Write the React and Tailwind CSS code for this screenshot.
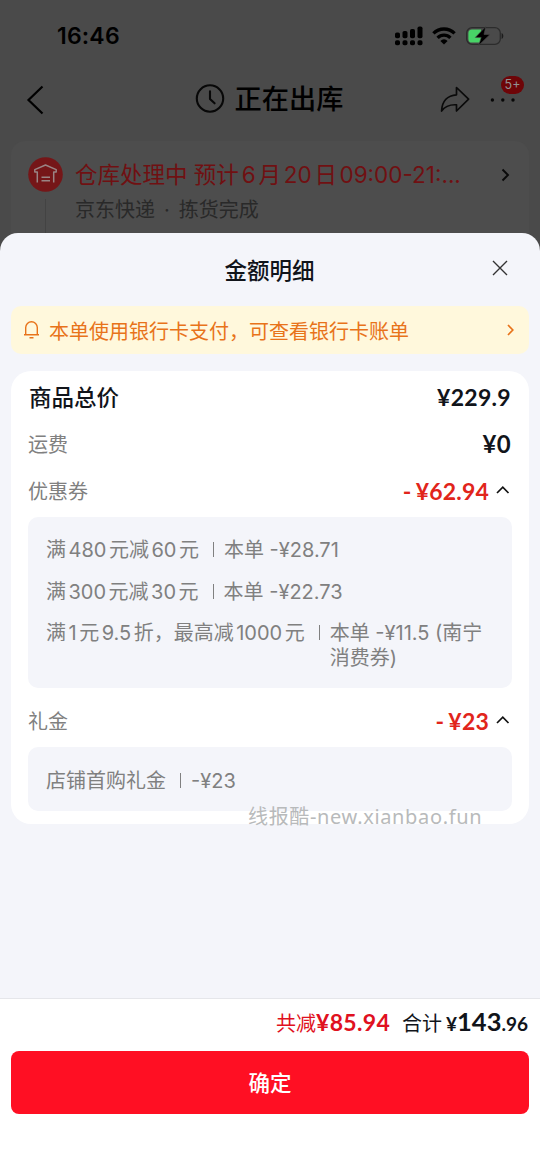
import React from "react";

// Splits a label into Chinese and numeric runs so that the numbers get a little side space.
function Mixed({ text, gap = "mx-[2.500px]" }) {
  return text.split(/([0-9.]+)/).map((part, i) =>
    /^[0-9.]+$/.test(part) ? (
      <span key={i} className={gap}>{part}</span>
    ) : (
      <span key={i}>{part}</span>
    )
  );
}

function StatusBar() {
  return (
    <div className="flex h-[72px] items-center justify-between pl-[57px] pr-[36px]">
      <span className="text-[23px] font-semibold tracking-[0.2px] text-black">16:46</span>
      <div className="flex items-center">
        <svg className="h-[20px] w-[28px]" viewBox="0 0 28 20" fill="#000">
          <rect x="0" y="6.500" width="5" height="5.700" rx="1.800" />
          <rect x="7.500" y="5" width="5" height="7.200" rx="1.800" />
          <rect x="15" y="3" width="5" height="9.200" rx="1.800" />
          <rect x="22.500" y="0.500" width="5" height="11.700" rx="1.800" />
          <rect x="0" y="14.300" width="5" height="5" rx="1.800" />
          <rect x="7.500" y="14.300" width="5" height="5" rx="1.800" />
          <rect x="15" y="14.300" width="5" height="5" rx="1.800" />
          <rect x="22.500" y="14.300" width="5" height="5" rx="1.800" />
        </svg>
        <svg className="ml-[9px] h-[18px] w-[24px]" viewBox="0 0 24 18" fill="none" stroke="#000" strokeWidth="3.300">
          <path d="M1.400 6.400a15 15 0 0 1 21.200 0" />
          <path d="M5.600 10.800a9 9 0 0 1 12.800 0" />
          <path d="M12 17.500l-3.600-3.600a5 5 0 0 1 7.200 0z" fill="#000" stroke="none" />
        </svg>
        <svg className="ml-[10px] h-[20px] w-[38px]" viewBox="0 0 38 20">
          <rect x="0.700" y="1.700" width="33.600" height="16.600" rx="5.400" fill="none" stroke="#2c2c2c" strokeWidth="1.300" />
          <path d="M6 3.500h9v13H6a3.600 3.600 0 0 1-3.600-3.600V7A3.600 3.600 0 0 1 6 3.500z" fill="#48d467" />
          <path d="M35.600 7v6c1.200-.5 1.700-1.600 1.700-3s-.5-2.500-1.700-3z" fill="#1c1c1c" />
          <path d="M19.800 .6L9.300 11.400h5.900L12.600 19.400 24 8.400h-6z" fill="#000" stroke="#4a4a4a" strokeWidth="0.600" />
        </svg>
      </div>
    </div>
  );
}

function NavBar() {
  return (
    <div className="flex h-[69px] items-start justify-between pl-[26px] pr-[16px] pt-[9px]">
      <svg className="mt-[4px] h-[30px] w-[158px]" viewBox="0 0 158 30" fill="none" stroke="#000" strokeWidth="2.200">
        <path d="M16.500 1.500L2.500 15l14 13.500" />
      </svg>
      <div className="flex items-center pt-px">
        <svg className="mb-[3px] mr-[10px] h-[30px] w-[30px]" viewBox="0 0 30 30" fill="none" stroke="#080808" strokeWidth="2.100">
          <circle cx="15" cy="14.500" r="13.200" />
          <path d="M15 7.300v7.600l4.600 4.400" strokeLinecap="round" strokeLinejoin="round" />
        </svg>
        <span className="text-[27.200px] font-medium leading-[36px] text-black">正在出库</span>
      </div>
      <div className="relative flex w-[170px] justify-end">
        <svg className="mr-[19px] mt-[5px] h-[27px] w-[30px]" viewBox="0 0 30 27" fill="none" stroke="#0a0a0a" strokeWidth="1.700" strokeLinejoin="round">
          <path d="M16.500 1.500L28.600 13.200 16.500 25v-6.200C9.500 18.400 4.800 20.500 1.600 25 2 15.300 7.500 9.300 16.500 8.800z" />
        </svg>
        <svg className="mr-[7px] mt-[14.500px] h-[8px] w-[28px]" viewBox="0 0 28 8" fill="#080808">
          <circle cx="3.400" cy="4" r="1.700" />
          <circle cx="13.800" cy="4" r="1.700" />
          <circle cx="24" cy="4" r="1.700" />
        </svg>
        <span className="absolute -top-[5px] right-0 flex h-[18px] w-[23px] items-center justify-center rounded-full bg-[#6e0508] text-[12.500px] text-[#929292]">
          5+
        </span>
      </div>
    </div>
  );
}

function DeliveryCard() {
  return (
    <div className="mx-[11px] flex h-[120px] rounded-[14px] bg-[#4d4d4d] px-[17px]">
      <div className="flex flex-col items-center pt-[16px]">
        <svg className="h-[35px] w-[35px]" viewBox="0 0 35 35">
          <circle cx="17.500" cy="17.500" r="17.300" fill="#751618" />
          <g fill="none" stroke="#9a8484" strokeWidth="1.500" strokeLinejoin="round">
            <path d="M9.300 25.500V15H6.800v-2.400L17.500 8l10.700 4.600V15h-2.500v10.500" />
            <path d="M13.500 20.200h8.500M13.500 23.700h8.500" />
          </g>
        </svg>
        <div className="mt-[7px] h-[60px] w-px bg-[#434343]" />
      </div>
      <div className="flex-1 pl-[12px] pt-[16px]">
        <div className="flex items-center justify-between">
          <span className="whitespace-nowrap pt-px text-[22.500px] leading-[34px] text-[#701012]">
            仓库处理中 预计<span className="mx-[2.800px]">6</span>月<span className="mx-[2.800px]">20</span>日<span className="ml-[2.500px]">09:00-21:...</span>
          </span>
          <svg className="h-[14px] w-[12px]" viewBox="0 0 12 14" fill="none" stroke="#0a0a0a" strokeWidth="1.900">
            <path d="M2.500 1.500L8 7l-5.500 5.500" />
          </svg>
        </div>
        <div className="mt-[3px] text-[20px] leading-[30px] text-[#292929]">
          京东快递<span className="mx-[9px]">·</span>拣货完成
        </div>
      </div>
    </div>
  );
}

function Caret() {
  return (
    <svg className="mb-[2px] ml-[7px] h-[10px] w-[14px]" viewBox="0 0 14 10" fill="none" stroke="#111" strokeWidth="1.700">
      <path d="M1 8L6.800 2.200 12.500 8" />
    </svg>
  );
}

function Discount({ amount }) {
  return (
    <div className="mr-[2px] flex items-center pb-[2px]">
      <span className="font-[Lato] text-[23px] font-bold tracking-[0.200px] text-[#e1251b]">
        <span className="mr-[4px]">-</span>¥{amount}
      </span>
      <Caret />
    </div>
  );
}

function DetailLine({ label, value, className = "" }) {
  return (
    <div className={"flex items-start leading-[25px] " + className}>
      <span className="shrink-0 whitespace-nowrap"><Mixed text={label} /></span>
      <span className="ml-[14px] mr-[10px] mt-[4px] h-[15px] w-px shrink-0 bg-[#808080]" />
      <span className="whitespace-pre-line">{value}</span>
    </div>
  );
}

export default function App() {
  return (
    <div className="flex h-[1168px] w-[540px] flex-col overflow-hidden bg-[#4a4a4a] font-[Inter,'Noto_Sans_CJK_SC',sans-serif]">
      <StatusBar />
      <NavBar />
      <DeliveryCard />
      <section className="relative -mt-[28px] flex flex-1 flex-col rounded-t-[18px] bg-[#f4f5fa]">
        <header className="relative flex h-[73px] shrink-0 items-center justify-center pt-[3px]">
          <h1 className="pr-px text-[22.500px] font-medium text-[#11141a]">金额明细</h1>
          <svg className="absolute right-[32px] top-[27px] h-[16px] w-[16px]" viewBox="0 0 16 16" fill="none" stroke="#333" strokeWidth="1.400">
            <path d="M1 1l14 14M15 1L1 15" />
          </svg>
        </header>
        <div className="mx-[11px] flex h-[48px] shrink-0 items-center rounded-[10px] bg-[#fff8dc] pl-[12px] pr-[14px] text-[#e8731a]">
          <svg className="h-[20px] w-[17px]" viewBox="0 0 17 20" fill="none" stroke="currentColor" strokeWidth="1.400">
            <path d="M1 14.800h15M2.700 14.800V7.500a5.800 5.800 0 0 1 11.600 0v7.300M6.500 17.700h4" />
          </svg>
          <span className="ml-[9px] pt-[3px] text-[20px]">本单使用银行卡支付，可查看银行卡账单</span>
          <svg className="ml-auto h-[12px] w-[9px]" viewBox="0 0 9 12" fill="none" stroke="currentColor" strokeWidth="1.700">
            <path d="M2 1l4.800 5L2 11" />
          </svg>
        </div>
        <div className="mx-[11px] mt-[17px] h-[453px] shrink-0 rounded-[20px] bg-white px-[17px] text-[20px] text-[#808080]">
          <div className="flex h-[49px] items-center justify-between pt-[4px]">
            <span className="pl-px text-[22.500px] font-medium text-[#11141a]">商品总价</span>
            <span className="pr-px font-[Lato] text-[23px] font-bold tracking-[0.300px] text-[#11141a]">¥229.9</span>
          </div>
          <div className="flex h-[47px] items-center justify-between">
            <span className="pt-[2px]">运费</span>
            <span className="pr-px font-[Lato] text-[24px] font-bold tracking-[0.300px] text-[#11141a]">¥0</span>
          </div>
          <div className="flex h-[50px] items-center justify-between">
            <span>优惠券</span>
            <Discount amount="62.94" />
          </div>
          <div className="h-[171px] rounded-[10px] bg-[#f4f5fa] pl-[18px] pt-[21px]">
            <DetailLine label="满480元减60元" value="本单 -¥28.71" />
            <DetailLine label="满300元减30元" value="本单 -¥22.73" className="mt-[17px]" />
            <DetailLine label="满1元9.5折，最高减1000元" value={"本单 -¥11.5 (南宁\n消费券)"} className="mt-[16px]" />
          </div>
          <div className="flex h-[59px] items-center justify-between pt-[9px]">
            <span>礼金</span>
            <Discount amount="23" />
          </div>
          <div className="relative h-[64px] rounded-[10px] bg-[#f4f5fa] pl-[18px] pt-[22px]">
            <DetailLine label="店铺首购礼金" value="-¥23" />
            <span className="absolute left-[220px] top-[56px] whitespace-nowrap font-['Noto_Sans','Noto_Sans_CJK_SC',sans-serif] text-[20px] leading-[28px] tracking-[0.650px] text-[#b8babb]">
              线报酷-new.xianbao.fun
            </span>
          </div>
        </div>
        <footer className="mt-auto h-[170px] shrink-0 border-t border-[#e5e6ea] bg-white px-[11px]">
          <div className="flex h-[52px] items-baseline justify-end pr-px pt-[6px] text-[20px] leading-[32px]">
            <span className="text-[#e01020]">共减</span>
            <span className="font-[Lato] text-[23px] font-bold tracking-[0.300px] text-[#e01020]">¥85.94</span>
            <span className="ml-[12px] text-[#11141a]">合计</span>
            <span className="ml-[4px] font-[Lato] font-bold text-[#11141a]">
              <span className="text-[19px]">¥</span>
              <span className="text-[25.500px]">143</span>
              <span className="text-[19px]">.96</span>
            </span>
          </div>
          <button className="flex h-[63px] w-full items-center justify-center rounded-[8px] bg-[#ff0f23] pt-[2px] text-[21.500px] font-medium text-white">
            确定
          </button>
        </footer>
      </section>
    </div>
  );
}
